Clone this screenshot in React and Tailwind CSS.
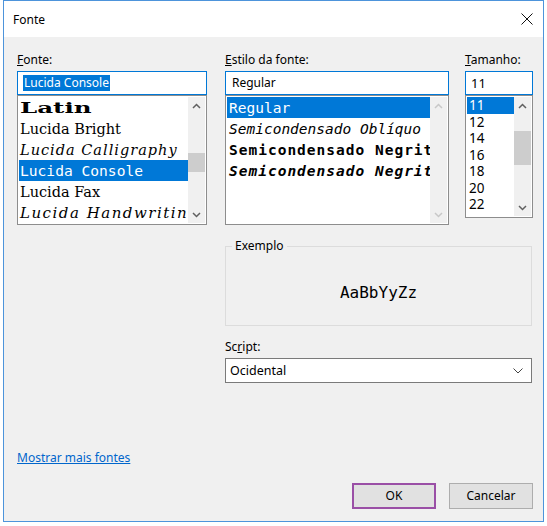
import React from "react";

const Chevron = ({ up, color }) => (
  <svg width="9" height="6" viewBox="0 0 9 6">
    <path
      d={up ? "M1 5 L4.5 1.5 L8 5" : "M1 1 L4.5 4.5 L8 1"}
      fill="none"
      stroke={color}
      strokeWidth="1.5"
    />
  </svg>
);

function ScrollBar({ thumbClass, disabled }) {
  const c = disabled ? "#c8c8c8" : "#606060";
  return (
    <div className="w-[17px] h-full flex flex-col bg-[#f0f0f0]">
      <div className="h-[17px] flex items-center justify-center">
        <Chevron up color={c} />
      </div>
      <div className="flex-1 flex flex-col">
        {thumbClass ? <div className={thumbClass} /> : null}
      </div>
      <div className="h-[17px] flex items-center justify-center">
        <Chevron color={c} />
      </div>
    </div>
  );
}

const mono = "font-['DejaVu_Sans_Mono',monospace]";
const serif = "font-['DejaVu_Serif',serif]";

export default function App() {
  return (
    <div className="w-[547px] h-[526px] bg-white pl-[3px] font-['Noto_Sans',sans-serif] text-[12px] leading-[16px] text-black">
      <div className="w-[541px] h-[522px] border border-[#4d94db] flex flex-col">
        {/* title bar */}
        <div className="h-[36px] bg-white flex items-center justify-between pl-[9px] pr-[10px]">
          <span className="mt-[2px]">Fonte</span>
          <svg width="12" height="12" viewBox="0 0 12 12">
            <path d="M0.5 0.5 L11.5 11.5 M11.5 0.5 L0.5 11.5" stroke="#111" strokeWidth="1" />
          </svg>
        </div>

        {/* body */}
        <div className="flex-1 bg-[#f0f0f0] pt-[15px] pl-[13px] pr-[10px] flex flex-col">
          <div className="flex">
            {/* Fonte column */}
            <div className="w-[190px] flex flex-col">
              <div>
                <span className="underline">F</span>onte:
              </div>
              <div className="mt-[3px] h-[24px] bg-white border border-[#0078d7] flex items-center pl-[5px]">
                <span className="bg-[#0078d7] text-white px-[1px]">Lucida Console</span>
              </div>
              <div className="h-[130px] bg-white border border-[#8d8d8d] p-[1px] flex">
                <div className="flex-1 overflow-hidden flex flex-col whitespace-nowrap">
                  <div className="h-[21px] flex items-center pl-[1px] shrink-0">
                    <span className={`${serif} font-bold text-[14px] inline-block scale-x-[1.75] origin-left`}>Latin</span>
                  </div>
                  <div className={`h-[21px] flex items-center pl-[1px] shrink-0 ${serif} text-[14.5px]`}>Lucida Bright</div>
                  <div className={`h-[21px] flex items-center pl-[1px] shrink-0 ${serif} italic text-[14.5px] tracking-[1px]`}>Lucida Calligraphy</div>
                  <div className={`h-[21px] flex items-center pl-[1px] shrink-0 bg-[#0078d7] text-white ${mono} text-[14.6px]`}>Lucida Console</div>
                  <div className={`h-[21px] flex items-center pl-[1px] shrink-0 ${serif} text-[14.5px]`}>Lucida Fax</div>
                  <div className={`h-[21px] flex items-center pl-[1px] shrink-0 ${serif} italic text-[15px] tracking-[1.5px]`}>Lucida Handwriting</div>
                </div>
                <ScrollBar thumbClass="mt-[39px] h-[19px] bg-[#cdcdcd]" />
              </div>
            </div>

            {/* Estilo column */}
            <div className="ml-[18px] w-[224px] flex flex-col">
              <div>
                <span className="underline">E</span>stilo da fonte:
              </div>
              <div className="mt-[3px] h-[24px] bg-white border border-[#0078d7] flex items-center pl-[5px]">
                <span className="px-[1px]">Regular</span>
              </div>
              <div className="h-[130px] bg-white border border-[#8d8d8d] p-[1px] flex">
                <div className={`flex-1 overflow-hidden flex flex-col whitespace-nowrap ${mono} text-[14.5px]`}>
                  <div className="h-[21px] flex items-center pl-[2px] shrink-0 bg-[#0078d7] text-white">Regular</div>
                  <div className="h-[21px] flex items-center pl-[2px] shrink-0 italic">Semicondensado Oblíquo</div>
                  <div className="h-[21px] flex items-center pl-[2px] shrink-0 font-bold tracking-[1px]">Semicondensado Negrito</div>
                  <div className="h-[21px] flex items-center pl-[2px] shrink-0 font-bold italic tracking-[1px]">Semicondensado Negrito Oblíquo</div>
                </div>
                <ScrollBar disabled />
              </div>
            </div>

            {/* Tamanho column */}
            <div className="ml-[16px] w-[69px] flex flex-col">
              <div>
                <span className="underline">T</span>amanho:
              </div>
              <div className="mt-[3px] h-[24px] bg-white border border-[#0078d7] flex items-center pl-[4px] text-[13px]">
                <span className="px-[1px]">11</span>
              </div>
              <div className="h-[123px] bg-white border border-[#8d8d8d] p-[1px] flex">
                <div className="flex-1 overflow-hidden flex flex-col text-[13.5px]">
                  <div className="h-[16.5px] flex items-center pl-[2px] shrink-0 bg-[#0078d7] text-white">11</div>
                  <div className="h-[16.5px] flex items-center pl-[2px] shrink-0">12</div>
                  <div className="h-[16.5px] flex items-center pl-[2px] shrink-0">14</div>
                  <div className="h-[16.5px] flex items-center pl-[2px] shrink-0">16</div>
                  <div className="h-[16.5px] flex items-center pl-[2px] shrink-0">18</div>
                  <div className="h-[16.5px] flex items-center pl-[2px] shrink-0">20</div>
                  <div className="h-[16.5px] flex items-center pl-[2px] shrink-0">22</div>
                </div>
                <ScrollBar thumbClass="mt-[17px] h-[34px] bg-[#cdcdcd]" />
              </div>
            </div>
          </div>

          {/* Exemplo + Script */}
          <div className="ml-[208px] w-[307px] flex flex-col">
            <fieldset className="mt-[13px] h-[88px] border border-[#dcdcdc]">
              <legend className="ml-[6px] px-[3px]">Exemplo</legend>
              <div className="h-[71px] pt-[7px] flex items-center justify-center">
                <span className={`${mono} text-[16px]`}>AaBbYyZz</span>
              </div>
            </fieldset>
            <div className="mt-[13px]">
              Sc<span className="underline">r</span>ipt:
            </div>
            <div className="mt-[3px] h-[25px] bg-white border border-[#7a7a7a] flex items-center justify-between pl-[4px] pr-[8px] text-[12.5px]">
              <span>Ocidental</span>
              <svg width="10" height="6" viewBox="0 0 10 6">
                <path d="M0.5 0.5 L5 5 L9.5 0.5" fill="none" stroke="#444" strokeWidth="1" />
              </svg>
            </div>
          </div>

          {/* link */}
          <div className="mt-[67px]">
            <span className="text-[#0066cc] underline">Mostrar mais fontes</span>
          </div>

          {/* buttons */}
          <div className="mt-[17px] flex justify-end gap-[13px]">
            <div className="w-[84px] h-[26px] border-2 border-[#9a4fa6] bg-[#e1e1e1] flex items-center justify-center">OK</div>
            <div className="w-[84px] h-[26px] border border-[#adadad] bg-[#e1e1e1] flex items-center justify-center">Cancelar</div>
          </div>
        </div>
      </div>
    </div>
  );
}
